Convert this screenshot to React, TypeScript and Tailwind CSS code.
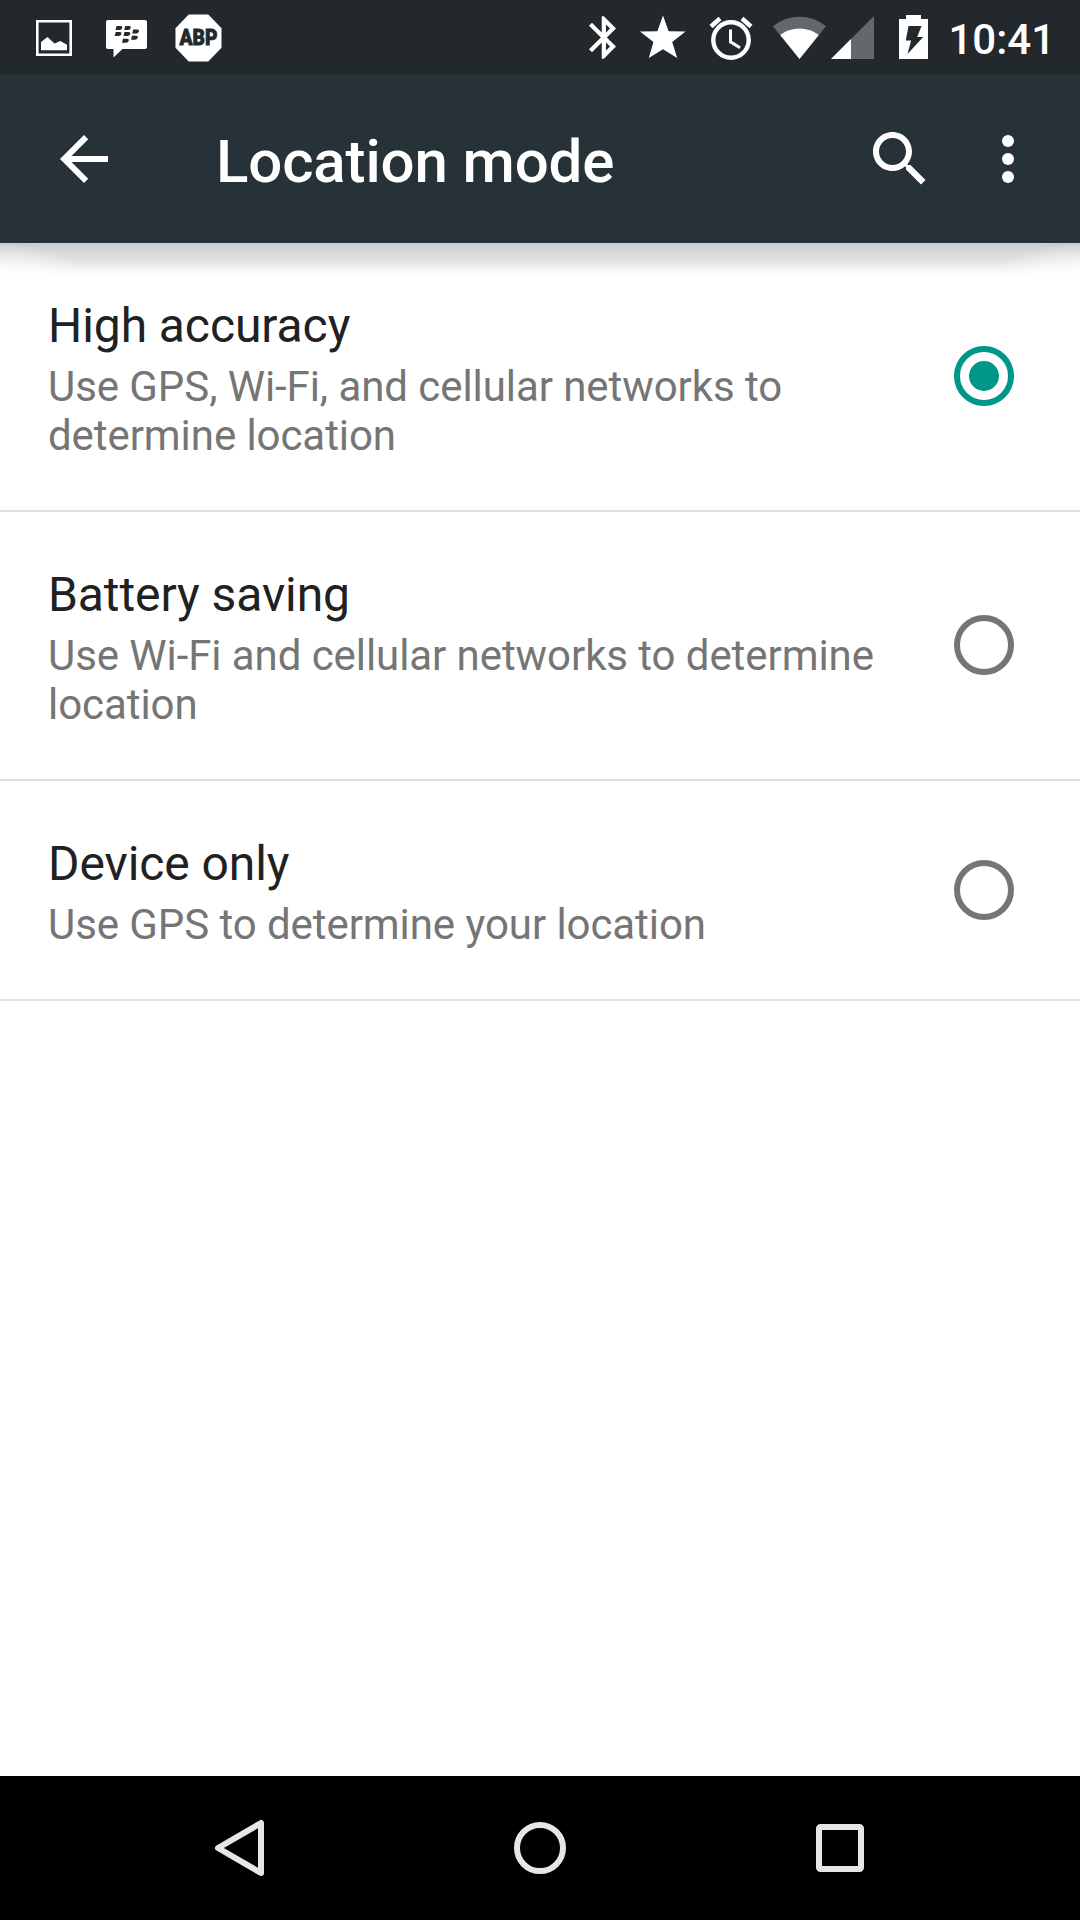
import React from "react";

const WHITE = "#ffffff";

function StatusBar() {
  return (
    <div className="flex h-[75px] items-center justify-between bg-[#22282c] pr-[25px] pl-[36px]">
      <div className="flex items-center">
        <svg width="36" height="36" viewBox="0 0 36 36" className="mt-px block">
          <path d="M1.3 1.3h33.4v33.4H1.3z" fill="none" stroke={WHITE} strokeWidth="2.6" />
          <path d="M5 30.3V22l6.5-5 7 6.5 5.8-2.5L31 24.8v5.5z" fill={WHITE} />
        </svg>
        <svg width="41" height="38" viewBox="0 0 41 38" className="mt-[3px] ml-[34px] block">
          <path d="M2 0h37q2 0 2 2v25q0 2-2 2H16.500l-9 8.500V29H2q-2 0-2-2V2q0-2 2-2z" fill={WHITE} />
          <g fill="#22282c">
            <path d="M10.500 6h4q2.300 0 1.700 2-.5 2-2.800 2H9.500zM19.200 6H23q2.300 0 1.700 2-.5 2-2.800 2h-3.700z" />
            <path d="M9.700 12h4q2.300 0 1.700 2-.5 2-2.800 2H8.700zM18.500 12h4q2.300 0 1.700 2-.5 2-2.800 2h-3.900zM27.200 9.500h4q2.300 0 1.700 2-.5 2-2.800 2h-3.900z" />
            <path d="M26 15.800h4q2.300 0 1.700 2-.5 2-2.800 2H25zM17 18.800h4q2.300 0 1.700 2-.5 2-2.800 2H16z" />
          </g>
        </svg>
        <svg width="47" height="48" viewBox="0 0 47 48" className="ml-[28px] block">
          <path d="M13.700.5h19.600L46.500 14.200v19.600L33.300 47.500H13.700L.5 33.800V14.200z" fill={WHITE} />
          <text
            x="23.5"
            y="31.3"
            textAnchor="middle"
            textLength="38"
            lengthAdjust="spacingAndGlyphs"
            fontFamily="Roboto, sans-serif"
            fontWeight="900"
            fontSize="21.5"
            fill="#22282c"
            stroke="#22282c"
            strokeWidth="0.8"
          >
            ABP
          </text>
        </svg>
      </div>
      <div className="flex items-center">
        <svg width="27" height="43" viewBox="5 2 12.71 20" fill={WHITE} className="block">
          <path d="M17.710 7.710L12 2h-1v7.590L6.410 5 5 6.410 10.590 12 5 17.590 6.410 19 11 14.410V22h1l5.710-5.710-4.300-4.290 4.300-4.290zM13 5.830l1.880 1.880L13 9.590V5.830zm1.880 10.460L13 18.170v-3.760l1.880 1.880z" />
        </svg>
        <svg width="46" height="44" viewBox="0 0 46 44" className="mb-[2px] ml-[24px] block">
          <path d="M23 .5l5.600 15.700 17 .3-13.400 10.500 5 16L23 34.200 8.800 43l4.600-16L0 16.500l17.400-.3z" fill={WHITE} />
        </svg>
        <svg width="44" height="44" viewBox="0 0 44 44" className="ml-[23px] block">
          <circle cx="22" cy="24" r="17.700" fill="none" stroke={WHITE} strokeWidth="4.400" />
          <path d="M2 10.500L11 2.500M42 10.500L33 2.500" stroke={WHITE} strokeWidth="4.400" />
          <path d="M21.500 13.500v12.300l9.500 6" fill="none" stroke={WHITE} strokeWidth="3" />
        </svg>
        <svg width="53" height="44" viewBox="0 0 53 44" className="ml-[20px] block">
          <path d="M0 10.200Q12 .800 26.500.800T53 10.200L26.500 43z" fill="#64686b" />
          <path d="M7.200 19Q15.500 12.500 26.500 12.500T45.800 19L26.500 43z" fill={WHITE} />
        </svg>
        <svg width="43" height="43" viewBox="0 0 43 43" className="ml-[5px] block">
          <path d="M43 0v43H0z" fill="#64686b" />
          <path d="M20 23v20H0z" fill={WHITE} />
        </svg>
        <svg width="29" height="44" viewBox="0 0 29 44" className="mb-px ml-[25px] block">
          <path d="M7 0h15v4h7v40H0V4h7z" fill={WHITE} />
          <path d="M9.500 11h13l-4.300 11h6L8.500 39l3.600-13.500H6.800z" fill="#22282c" />
        </svg>
        <span className="mt-[5px] ml-[20px] text-[42px] leading-none font-medium text-white">10:41</span>
      </div>
    </div>
  );
}

function AppBar() {
  return (
    <header className="relative z-10 flex h-[168px] items-center bg-[#273238] pl-[48px]">
      <svg width="72" height="72" viewBox="0 0 24 24" fill={WHITE} className="block">
        <path d="M20 11H7.830l5.590-5.590L12 4l-8 8 8 8 1.410-1.410L7.830 13H20v-2z" />
      </svg>
      <h1 className="mt-[5px] ml-[96px] flex-1 text-[60px] leading-[70px] font-medium tracking-[-0.13px] text-white">
        Location mode
      </h1>
      <svg width="72" height="72" viewBox="0 0 24 24" fill={WHITE} className="block">
        <path d="M15.500 14h-.790l-.280-.270C15.410 12.590 16 11.110 16 9.500 16 5.910 13.090 3 9.500 3S3 5.910 3 9.500 5.910 16 9.500 16c1.610 0 3.090-.590 4.230-1.570l.270.280v.790l5 4.990L20.490 19l-4.990-5zm-6 0C7.010 14 5 11.990 5 9.500S7.010 5 9.500 5 14 7.010 14 9.500 11.990 14 9.500 14z" />
      </svg>
      <svg width="72" height="72" viewBox="0 0 24 24" fill={WHITE} className="mr-[36px] ml-[36px] block">
        <circle cx="12" cy="6" r="2" />
        <circle cx="12" cy="12" r="2" />
        <circle cx="12" cy="18" r="2" />
      </svg>
      <div className="absolute top-full left-0 flex h-[32px] w-full justify-between bg-[linear-gradient(to_bottom,#cbcbcb_0%,#e1e1e1_52%,#ffffff_100%)]">
        <div className="h-full w-[84px] bg-[radial-gradient(ellipse_farthest-side_at_bottom_left,#ffffffcc_0%,#ffffff80_50%,#ffffff00_100%)]" />
        <div className="h-full w-[84px] bg-[radial-gradient(ellipse_farthest-side_at_bottom_right,#ffffffcc_0%,#ffffff80_50%,#ffffff00_100%)]" />
      </div>
    </header>
  );
}

type Option = { title: string; lines: string[]; selected?: boolean };

const options: Option[] = [
  {
    title: "High accuracy",
    lines: ["Use GPS, Wi-Fi, and cellular networks to", "determine location"],
    selected: true,
  },
  {
    title: "Battery saving",
    lines: ["Use Wi-Fi and cellular networks to determine", "location"],
  },
  { title: "Device only", lines: ["Use GPS to determine your location"] },
];

function Radio({ selected }: { selected?: boolean }) {
  return (
    <span
      className={
        selected
          ? "mb-px flex size-[60px] items-center justify-center rounded-full border-[6px] border-[#009688]"
          : "mb-px flex size-[60px] items-center justify-center rounded-full border-[6px] border-[#757575]"
      }
    >
      {selected && <span className="size-[30px] rounded-full bg-[#009688]" />}
    </span>
  );
}

function OptionRow({ title, lines, selected }: Option) {
  return (
    <li className="flex items-center justify-between border-b-2 border-[#e0e0e0] pr-[66px] pl-[48px]">
      <div className="pt-[55px] pb-[50px]">
        <div className="text-[48px] leading-[56px] tracking-[-0.08px] text-[#212121]">{title}</div>
        <div className="mt-[8px] text-[42px] leading-[49px] tracking-[-0.07px] whitespace-nowrap text-[#757575]">
          {lines.map((line) => (
            <div key={line}>{line}</div>
          ))}
        </div>
      </div>
      <Radio selected={selected} />
    </li>
  );
}

function NavBar() {
  return (
    <nav className="flex h-[144px] items-center justify-center gap-[204px] bg-black">
      <svg width="96" height="96" viewBox="0 0 96 96" fill="none" stroke="#e6e6e6" strokeWidth="6" strokeLinejoin="round">
        <path d="M69 23v50L26 48z" />
      </svg>
      <svg width="96" height="96" viewBox="0 0 96 96" fill="none" stroke="#e6e6e6" strokeWidth="6">
        <circle cx="48" cy="48" r="23" />
      </svg>
      <svg width="96" height="96" viewBox="0 0 96 96" fill="none" stroke="#e6e6e6" strokeWidth="6">
        <rect x="27" y="27" width="42" height="42" rx="1.500" />
      </svg>
    </nav>
  );
}

export default function App() {
  return (
    <div className="flex h-[1920px] w-[1080px] flex-col overflow-hidden bg-white font-[Roboto,sans-serif]">
      <StatusBar />
      <AppBar />
      <ul className="flex-1">
        {options.map((o) => (
          <OptionRow key={o.title} {...o} />
        ))}
      </ul>
      <NavBar />
    </div>
  );
}
